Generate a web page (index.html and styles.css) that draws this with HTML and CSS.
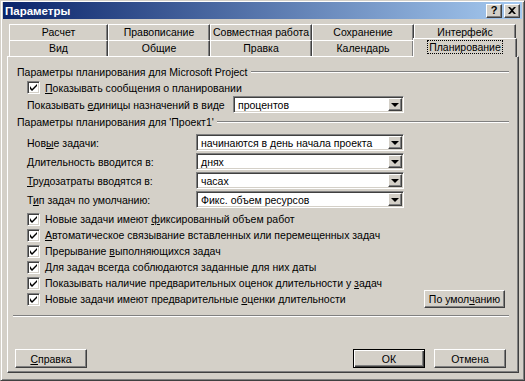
FILE: index.html
```html
<!DOCTYPE html>
<html lang="ru">
<head>
<meta charset="utf-8">
<title>Параметры</title>
<link rel="stylesheet" href="styles.css">
</head>
<body>
<div class="window">
  <div class="titlebar">
    <span class="title">Параметры</span>
    <div class="tbtns">
      <span class="tbtn help">?</span>
      <span class="tbtn close"><svg width="8" height="7" viewBox="0 0 8 7"><path d="M0 0h2l2 2 2-2h2L5 3.5 8 7H6L4 5 2 7H0l3-3.5z" fill="#000"/></svg></span>
    </div>
  </div>

  <div class="tabs">
    <div class="tabrow">
      <div class="tab first">Расчет</div>
      <div class="tab">Правописание</div>
      <div class="tab">Совместная работа</div>
      <div class="tab">Сохранение</div>
      <div class="tab">Интерфейс</div>
    </div>
    <div class="tabrow">
      <div class="tab first">Вид</div>
      <div class="tab">Общие</div>
      <div class="tab">Правка</div>
      <div class="tab">Календарь</div>
      <div class="tab selected"><span class="focus">Планирование</span></div>
    </div>
  </div>

  <div class="panel">
    <div class="group-title"><span>Параметры планирования для Microsoft Project</span><i class="line"></i></div>
    <div class="opt check-row first-check"><span class="cb"><svg width="7" height="7" viewBox="0 0 7 7"><path d="M0 2v3l2 2 5-5V0L2 5z" fill="#000"/></svg></span><span><u>П</u>оказывать сообщения о планировании</span></div>
    <div class="field-row">
      <span class="lbl wide">Показывать <u>е</u>диницы назначений в виде</span>
      <div class="combo short"><span class="val">процентов</span><span class="drop"><i></i></span></div>
    </div>

    <div class="group-title g2"><span>Параметры планирования для 'Проект1'</span><i class="line"></i></div>
    <div class="field-row r1">
      <span class="lbl">Нов<u>ы</u>е задачи:</span>
      <div class="combo"><span class="val">начинаются в день начала проекта</span><span class="drop"><i></i></span></div>
    </div>
    <div class="field-row">
      <span class="lbl"><u>Д</u>лительность вводится в:</span>
      <div class="combo"><span class="val">днях</span><span class="drop"><i></i></span></div>
    </div>
    <div class="field-row">
      <span class="lbl"><u>Т</u>рудозатраты вводятся в:</span>
      <div class="combo"><span class="val">часах</span><span class="drop"><i></i></span></div>
    </div>
    <div class="field-row">
      <span class="lbl">Т<u>и</u>п задач по умолчанию:</span>
      <div class="combo"><span class="val">Фикс. объем ресурсов</span><span class="drop"><i></i></span></div>
    </div>

    <div class="checks">
      <div class="opt crow"><span class="cb"><svg width="7" height="7" viewBox="0 0 7 7"><path d="M0 2v3l2 2 5-5V0L2 5z" fill="#000"/></svg></span><span>Новые задачи имеют <u>ф</u>иксированный объем работ</span></div>
      <div class="opt crow"><span class="cb"><svg width="7" height="7" viewBox="0 0 7 7"><path d="M0 2v3l2 2 5-5V0L2 5z" fill="#000"/></svg></span><span><u>А</u>втоматическое связывание вставленных или перемещенных задач</span></div>
      <div class="opt crow"><span class="cb"><svg width="7" height="7" viewBox="0 0 7 7"><path d="M0 2v3l2 2 5-5V0L2 5z" fill="#000"/></svg></span><span>Прерывание <u>в</u>ыполняющихся задач</span></div>
      <div class="opt crow"><span class="cb"><svg width="7" height="7" viewBox="0 0 7 7"><path d="M0 2v3l2 2 5-5V0L2 5z" fill="#000"/></svg></span><span><u>Д</u>ля задач всегда соблюдаются заданные для них даты</span></div>
      <div class="opt crow"><span class="cb"><svg width="7" height="7" viewBox="0 0 7 7"><path d="M0 2v3l2 2 5-5V0L2 5z" fill="#000"/></svg></span><span>Показывать наличие предварительных оценок длительности у <u>з</u>адач</span></div>
      <div class="opt crow last"><span class="cb"><svg width="7" height="7" viewBox="0 0 7 7"><path d="M0 2v3l2 2 5-5V0L2 5z" fill="#000"/></svg></span><span>Новые задачи имеют предварительные <u>о</u>ценки длительности</span><span class="btn defaults">По умол<u>ч</u>анию</span></div>
    </div>

    <div class="separator"></div>

    <div class="buttons">
      <span class="btn"><u>С</u>правка</span>
      <span class="btn ok">ОК</span>
      <span class="btn">Отмена</span>
    </div>
  </div>
</div>
</body>
</html>
```

FILE: styles.css
```css
* { box-sizing: border-box; }
html, body { margin: 0; padding: 0; }
body {
  width: 525px;
  height: 381px;
  overflow: hidden;
  background: #d4d0c8;
  font-family: "Liberation Sans", Arial, sans-serif;
  font-size: 10.5px;
  color: #000;
}
u { text-decoration: underline; text-underline-offset: 1px; }

.window {
  width: 525px;
  height: 381px;
  background: #d4d0c8;
  border: 1px solid;
  border-color: #d4d0c8 #404040 #404040 #d4d0c8;
  box-shadow: inset 1px 1px #fff, inset -1px -1px #808080;
  padding: 1px 2px 0 2px;
  display: flex;
  flex-direction: column;
}

.titlebar {
  height: 17px;
  flex: none;
  background: linear-gradient(to right, #0a246a, #a6caf0);
  display: flex;
  align-items: center;
  padding-left: 2px;
}
.title { color: #fff; font-weight: bold; font-size: 11.5px; }
.tbtns { margin-left: auto; display: flex; gap: 2px; padding-right: 2px; }
.tbtn {
  width: 16px;
  height: 14px;
  background: #d4d0c8;
  border: 1px solid;
  border-color: #fff #404040 #404040 #fff;
  box-shadow: inset -1px -1px #808080;
  display: flex;
  align-items: center;
  justify-content: center;
  font-weight: bold;
  font-size: 11px;
  line-height: 1;
}

.tabs { margin: 5px 0 0 6px; width: 507px; flex: none; }
.tabrow { display: flex; height: 16px; }
.tab {
  flex: none;
  width: 102px;
  height: 16px;
  border-top: 1px solid #fff;
  border-left: 1px solid #fff;
  border-right: 1px solid #404040;
  box-shadow: inset -1px 0 #808080;
  text-align: center;
  line-height: 14px;
  white-space: nowrap;
}
.tab.first { width: 99px; }
.tab.selected {
  position: relative;
  z-index: 2;
  width: 104px;
  height: 19px;
  margin-top: -2px;
  margin-left: -1px;
  background: #d4d0c8;
  line-height: 17px;
}
.focus { outline: 1px dotted #000; padding: 0 1px; }

.panel {
  margin-left: 4px;
  width: 512px;
  height: 317px;
  flex: none;
  border: 1px solid;
  border-color: #fff #404040 #404040 #fff;
  box-shadow: inset -1px -1px #808080;
  display: flex;
  flex-direction: column;
}

.group-title {
  display: flex;
  align-items: center;
  height: 14px;
  margin: 8px 9px 0 9px;
  white-space: nowrap;
}
.group-title.g2 { margin-top: 2px; }
.line {
  flex: 1;
  height: 2px;
  border-top: 1px solid #808080;
  border-bottom: 1px solid #fff;
  margin-left: 3px;
}

.opt { display: flex; align-items: center; margin-left: 19px; white-space: nowrap; }
.check-row { height: 17px; }
.cb {
  width: 13px;
  height: 13px;
  flex: none;
  background: #fff;
  border: 1px solid;
  border-color: #808080 #fff #fff #808080;
  box-shadow: inset 1px 1px #404040, inset -1px -1px #d4d0c8;
  margin-right: 5px;
  display: flex;
  align-items: center;
  justify-content: center;
}

.field-row { display: flex; align-items: center; height: 17px; margin-left: 19px; white-space: nowrap; }
.field-row.r1 { margin-top: 5px; }
.field-row + .field-row { margin-top: 2px; }
.lbl { width: 169px; flex: none; }
.lbl.wide { width: 206px; }
.combo {
  width: 208px;
  height: 17px;
  flex: none;
  display: flex;
  align-items: center;
  background: #fff;
  border: 1px solid;
  border-color: #808080 #fff #fff #808080;
  box-shadow: inset 1px 1px #404040, inset -1px -1px #d4d0c8;
  padding: 1px;
}
.combo.short { width: 171px; }
.val { flex: 1; padding-left: 3px; overflow: hidden; }
.drop {
  width: 14px;
  height: 13px;
  flex: none;
  background: #d4d0c8;
  border: 1px solid;
  border-color: #fff #404040 #404040 #fff;
  box-shadow: inset -1px -1px #808080;
  display: flex;
  align-items: center;
  justify-content: center;
}
.drop i {
  width: 0;
  height: 0;
  border-left: 4px solid transparent;
  border-right: 4px solid transparent;
  border-top: 4px solid #000;
}

.checks { margin-top: 3px; display: flex; flex-direction: column; }
.crow { height: 16px; }
.crow.last { margin-right: 13px; }

.btn {
  display: flex;
  align-items: center;
  justify-content: center;
  width: 72px;
  height: 19px;
  background: #d4d0c8;
  border: 1px solid;
  border-color: #fff #404040 #404040 #fff;
  box-shadow: inset -1px -1px #808080;
  white-space: nowrap;
}
.btn.defaults { margin-left: auto; width: 81px; height: 18px; }
.btn.ok {
  border-color: #000;
  box-shadow: inset 1px 1px #fff, inset -1px -1px #404040, inset -2px -2px #808080;
}

.separator {
  margin: 8px 9px 0 5px;
  height: 2px;
  border-top: 1px solid #808080;
  border-bottom: 1px solid #fff;
}

.buttons {
  display: flex;
  margin: 32px 12px 0 7px;
  gap: 9px;
}
.buttons .btn:first-child { margin-right: auto; }
```
